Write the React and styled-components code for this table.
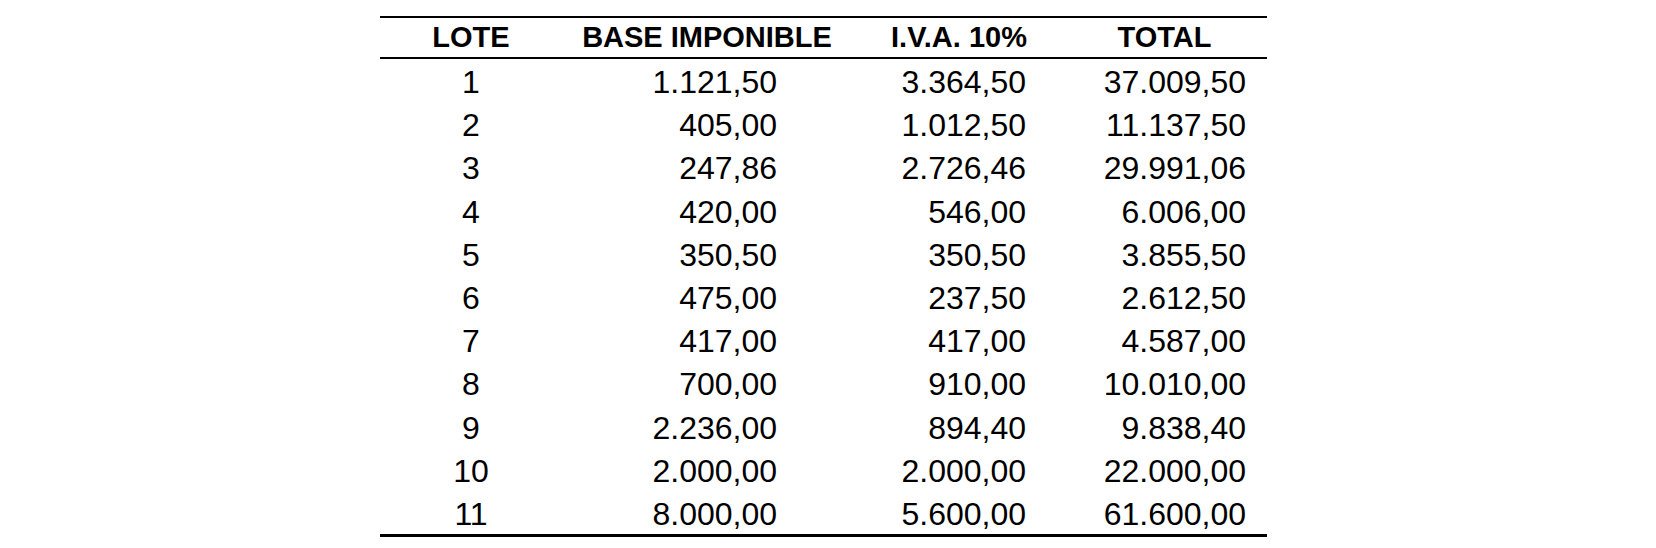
import React from 'react'
import styled, { createGlobalStyle } from 'styled-components'

const GlobalStyle = createGlobalStyle`
    html, body {
        margin: 0;
        padding: 0;
        background: #ffffff;
    }
    body {
        font-family: 'Liberation Sans', Arial, Helvetica, sans-serif;
        color: #000000;
    }
`

const Page = styled.div`
    width: 1656px;
    height: 548px;
    padding: 16px 0 0 380px;
    box-sizing: border-box;
`

const Table = styled.div`
    width: 887px;
    display: grid;
    grid-template-columns: 182px 290px 214px 201px;
    border-top: 2px solid #000;
    border-bottom: 3px solid #000;
    box-sizing: border-box;
`

const HeadCell = styled.div`
    height: 39px;
    display: flex;
    align-items: center;
    justify-content: center;
    padding-right: ${(p) => p.$pad || 0}px;
    font-size: 29px;
    font-weight: 700;
    border-bottom: 2px solid #000;
    white-space: nowrap;
`

const Cell = styled.div`
    height: 43.2px;
    box-sizing: border-box;
    padding-top: 4px;
    display: flex;
    align-items: center;
    justify-content: ${(p) => (p.$center ? 'center' : 'flex-end')};
    padding-right: ${(p) => p.$pad || 0}px;
    font-size: 32px;
    white-space: nowrap;
`

const headers = ['LOTE', 'BASE IMPONIBLE', 'I.V.A. 10%', 'TOTAL']

const rows = [
    ['1', '1.121,50', '3.364,50', '37.009,50'],
    ['2', '405,00', '1.012,50', '11.137,50'],
    ['3', '247,86', '2.726,46', '29.991,06'],
    ['4', '420,00', '546,00', '6.006,00'],
    ['5', '350,50', '350,50', '3.855,50'],
    ['6', '475,00', '237,50', '2.612,50'],
    ['7', '417,00', '417,00', '4.587,00'],
    ['8', '700,00', '910,00', '10.010,00'],
    ['9', '2.236,00', '894,40', '9.838,40'],
    ['10', '2.000,00', '2.000,00', '22.000,00'],
    ['11', '8.000,00', '5.600,00', '61.600,00'],
]

// right padding of the number columns, so figures line up under the headers
const pads = [0, 75, 40, 21]
const headPads = [0, 0, 0, 4]

export default function App() {
    return (
        <Page>
            <GlobalStyle />
            <Table>
                {headers.map((h, i) => (
                    <HeadCell key={h} $pad={headPads[i]}>
                        {h}
                    </HeadCell>
                ))}
                {rows.map((r) =>
                    r.map((v, i) => (
                        <Cell key={r[0] + '-' + i} $center={i === 0} $pad={pads[i]}>
                            {v}
                        </Cell>
                    ))
                )}
            </Table>
        </Page>
    )
}
